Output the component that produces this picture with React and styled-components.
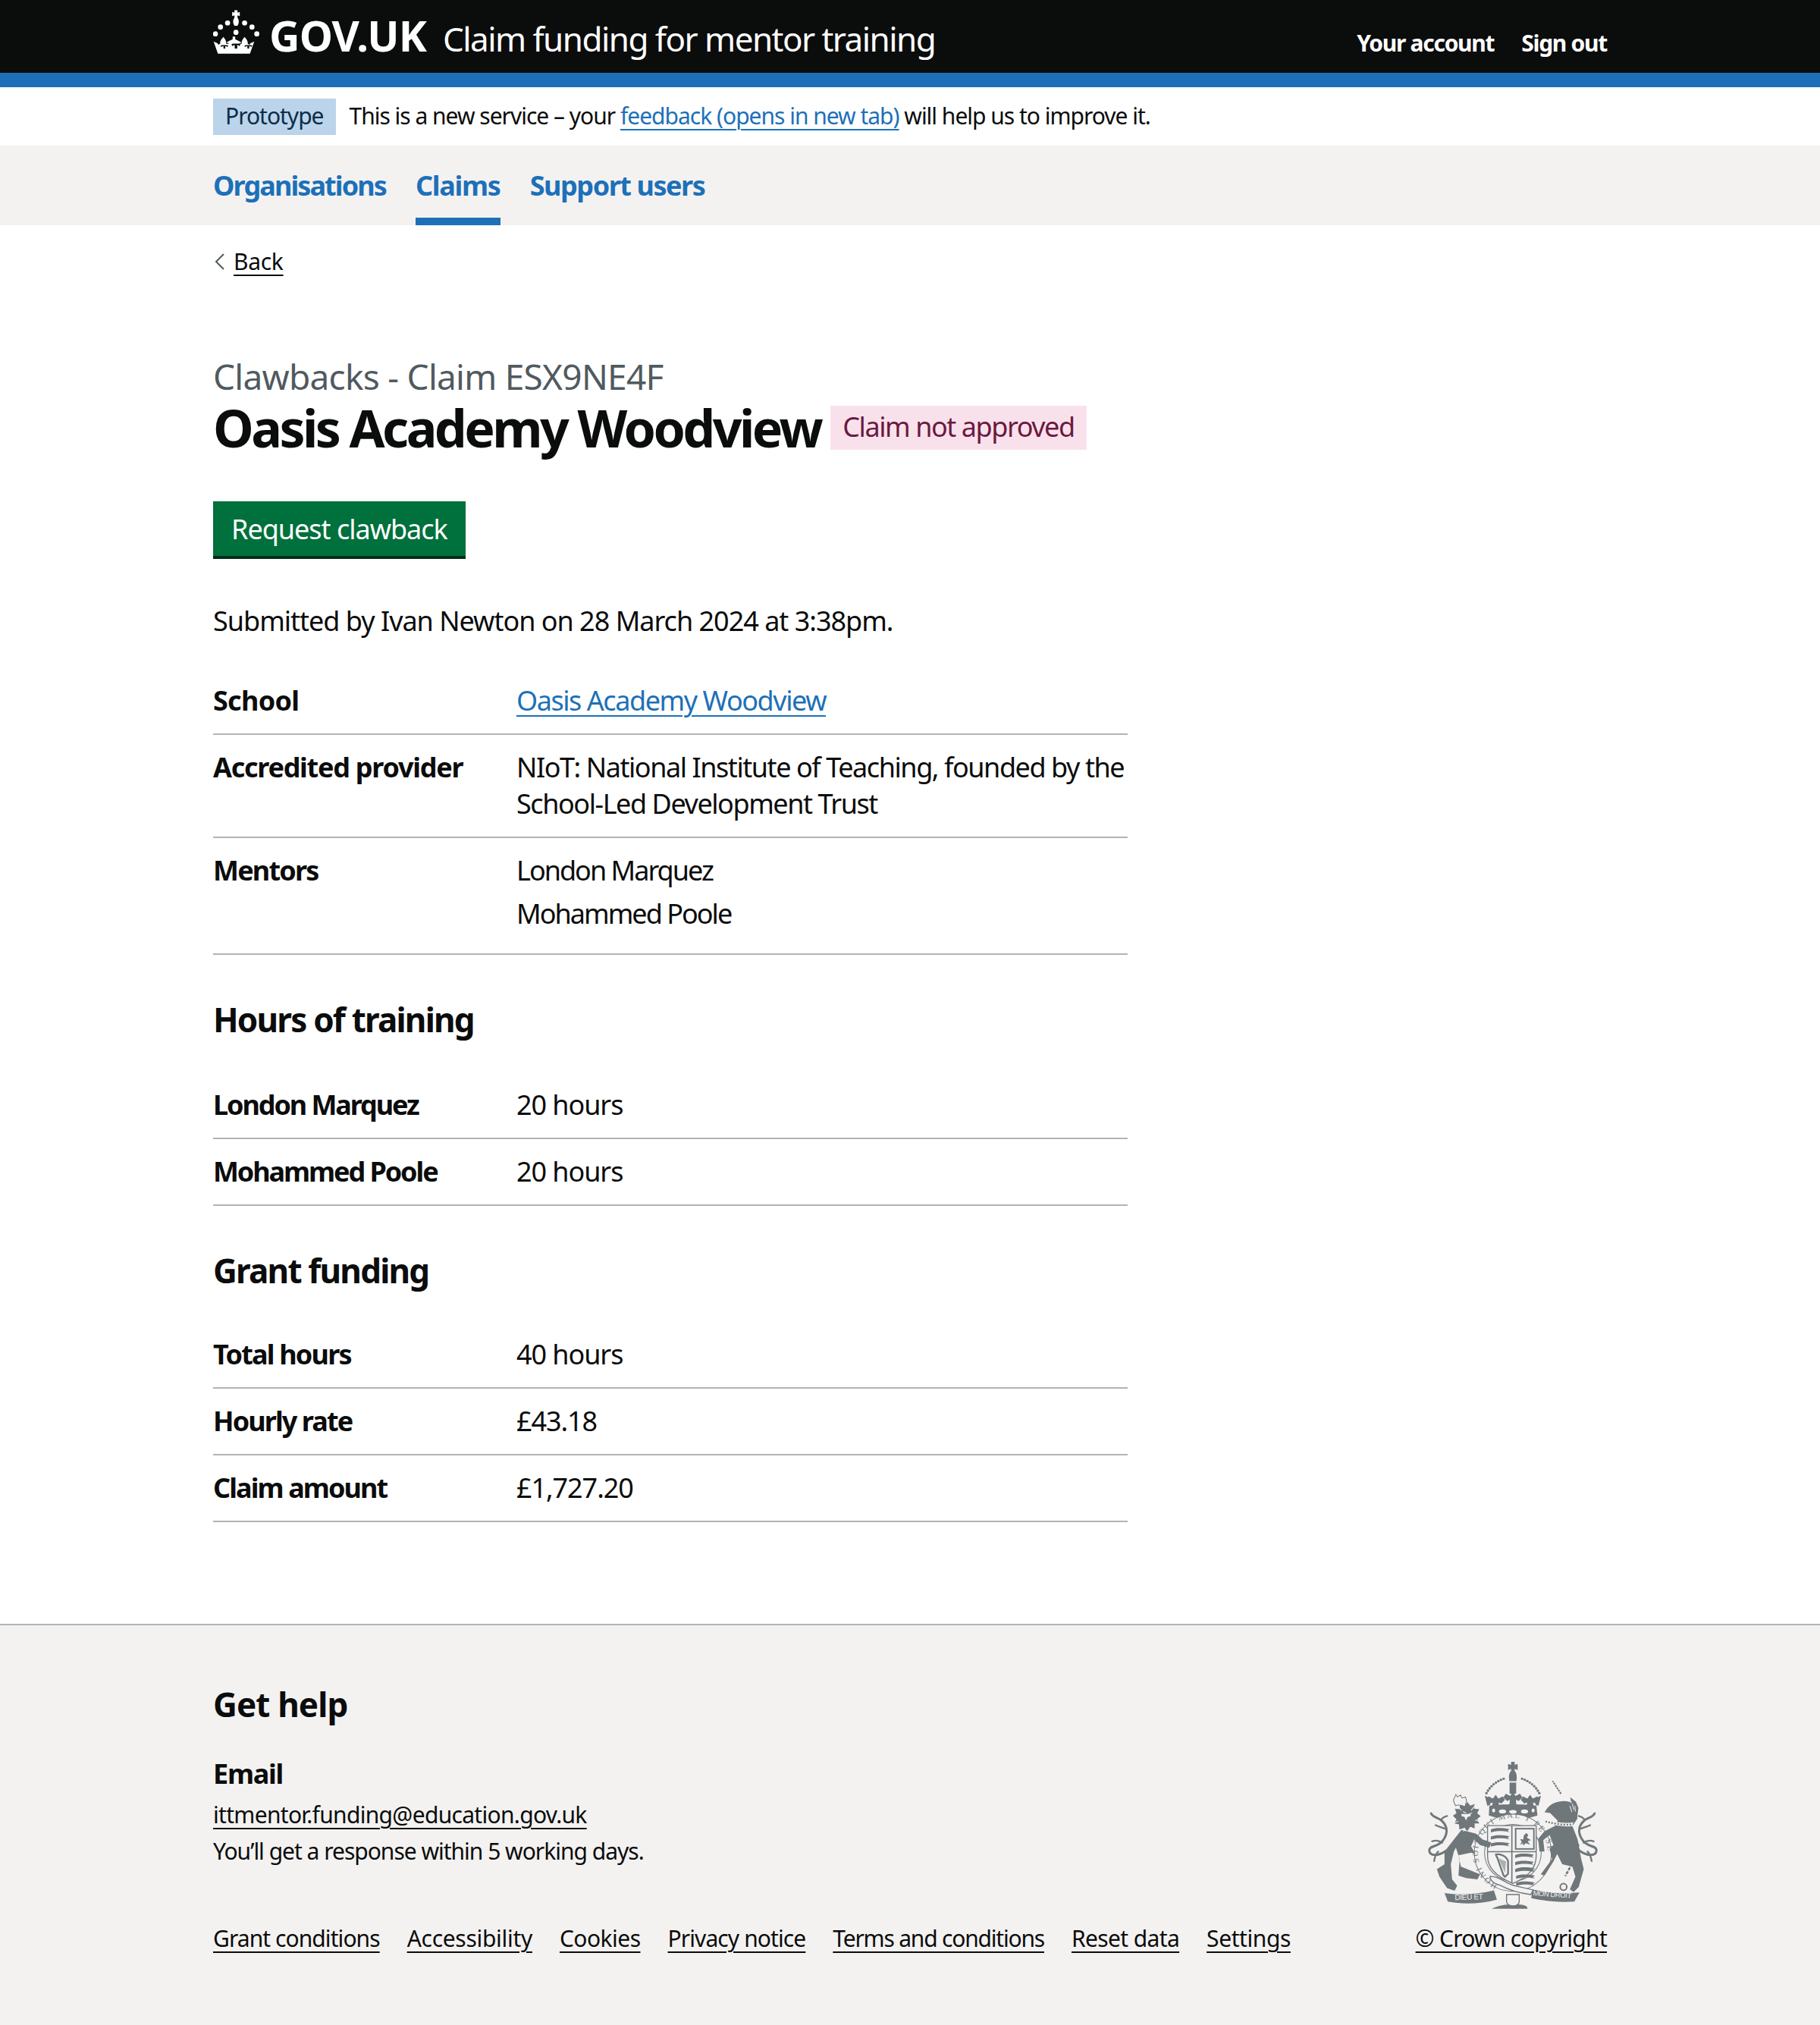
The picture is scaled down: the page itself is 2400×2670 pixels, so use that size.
import React from "react";
import styled, { createGlobalStyle } from "styled-components";

const Global = createGlobalStyle`
  html, body { margin: 0; padding: 0; background: #fff; }
  body { font-family: "Noto Sans", sans-serif; color: #0b0c0c; font-size: 36px; line-height: 48px; letter-spacing: -0.028em; }
  * { box-sizing: border-box; }
`;
const Wrap = styled.div`width: 1838px; margin: 0 auto;`;

const Header = styled.header`height: 115px; background: #0b0c0c; border-bottom: 19px solid #1d70b8; color: #fff;`;
const HeaderInner = styled(Wrap)`display: flex; align-items: baseline; padding-top: 16px;`;
const Logo = styled.a`display: flex; align-items: baseline; color: #fff; text-decoration: none;`;
const CrownSvg = styled.svg`width: 61px; height: 58px; margin-right: 13px; align-self: flex-start; margin-top: -3px; fill: #fff; flex: none;`;
const Word = styled.span`font-weight: 700; font-size: 56px; line-height: 60px; letter-spacing: -0.015em;`;
const Service = styled.a`margin-left: 22px; font-size: 44px; line-height: 60px; letter-spacing: -0.035em; color: #fff; text-decoration: none;`;
const Account = styled.nav`margin-left: auto; display: flex; gap: 36px;`;
const AccountLink = styled.a`font-weight: 700; font-size: 30px; letter-spacing: -0.043em; color: #fff; text-decoration: none;`;

const Phase = styled(Wrap)`height: 77px; display: flex; align-items: flex-start; gap: 18px; padding-top: 15px;`;
const PhaseTag = styled.strong`height: 48px; padding: 0 16px; background: #bbd4ea; color: #0c2d4a; font-weight: 400; font-size: 30px; line-height: 46px;`;
const PhaseText = styled.span`font-size: 30px; line-height: 46px;`;
const Link = styled.a`color: #1d70b8; text-decoration: underline; text-decoration-thickness: 2px; text-underline-offset: 6px;`;

const NavBar = styled.div`background: #f3f2f1; height: 105px;`;
const NavInner = styled(Wrap)`display: flex; gap: 39px; height: 105px;`;
const NavItem = styled.a`display: flex; align-items: center; padding-top: 10px; font-weight: 700; font-size: 36px; letter-spacing: ${p => p.$track}em; color: #1d70b8; border-bottom: 10px solid ${p => p.$active ? "#1d70b8" : "transparent"};`;

const Back = styled.a`display: inline-flex; align-items: center; gap: 10px; margin-top: 28px; height: 40px; font-size: 30px; line-height: 40px; letter-spacing: -0.01em; color: #0b0c0c;`;
const BackText = styled.span`text-decoration: underline; text-decoration-thickness: 2px; text-underline-offset: 6px;`;
const BackIcon = styled.svg`width: 16px; height: 24px; margin-left: 1px; fill: none; stroke: #505a5f; stroke-width: 2;`;

const Main = styled.main`padding-top: 100px; padding-bottom: 134px; width: 1206px;`;
const Caption = styled.div`font-size: 46px; line-height: 56px; color: #505a5f; letter-spacing: -0.016em;`;
const TitleRow = styled.div`display: flex; align-items: center; gap: 13px; height: 80px; margin-bottom: 57px;`;
const H1 = styled.h1`margin: 0; font-size: 68px; line-height: 80px; font-weight: 700; letter-spacing: -0.052em;`;
const Tag = styled.span`height: 58px; padding: 0 16px; background: #f9e1ec; color: #6b1a3f; font-size: 36px; line-height: 56px; letter-spacing: -0.04em;`;
const Button = styled.a`display: inline-flex; align-items: center; height: 76px; padding: 2px 24px 0; background: #00703c; border-bottom: 4px solid #002d18; color: #fff; font-size: 36px;`;
const Lead = styled.p`margin: 58px 0 38px; font-size: 36px; line-height: 48px;`;

const H2 = styled.h2`margin: ${p => p.$top}px 0 ${p => p.$bottom}px; font-size: 44px; line-height: 60px; font-weight: 700; letter-spacing: -0.041em;`;
const Row = styled.div`display: grid; grid-template-columns: 400px 1fr; padding: 19px 0 19px; border-bottom: 2px solid #b1b4b6;`;
const Key = styled.div`font-weight: 700; letter-spacing: ${p => p.$track ?? -0.05}em;`;
const Val = styled.div`letter-spacing: -0.04em;`;
const NumVal = styled.div`letter-spacing: -0.03em;`;
const ValLine = styled.p`margin: 0 0 9px; letter-spacing: -0.055em;`;

const Footer = styled.footer`background: #f3f2f1; border-top: 2px solid #b1b4b6; height: 530px; padding-top: 74px;`;
const FootH2 = styled.h2`margin: 0 0 38px; font-size: 44px; line-height: 60px; font-weight: 700; letter-spacing: -0.02em;`;
const FootKey = styled.div`font-weight: 700; font-size: 36px; line-height: 48px; letter-spacing: -0.035em; margin-bottom: 6px;`;
const FootLine = styled.div`font-size: 30px; line-height: 48px; color: #0b0c0c;`;
const DarkLink = styled.a`color: #0b0c0c; letter-spacing: ${p => p.$track}em; text-decoration: underline; text-decoration-thickness: 2px; text-underline-offset: 6px;`;
const FootMeta = styled.div`display: flex; justify-content: space-between; align-items: flex-end; margin-top: 67px;`;
const FootLinks = styled.div`display: flex; gap: 36px; font-size: 30px; line-height: 48px;`;
const Copyright = styled.div`position: relative; font-size: 30px; line-height: 48px;`;
const Arms = styled.svg`position: absolute; right: 12px; bottom: 62px; width: 224px; height: 197px;`;

const Crown = () => (
  <CrownSvg viewBox="63 40 182 172" aria-hidden="true">
    <path d="M147 41h12v10l9-3v16l-9-3v9c7 10 7 22 0 32h-12c-7-10-7-22 0-32v-9l-9 3V48l9 3z" />
    <circle cx="120" cy="91" r="10" /><circle cx="187" cy="91" r="10" />
    <circle cx="92" cy="107" r="10" /><circle cx="216" cy="107" r="10" />
    <circle cx="72" cy="134" r="10" /><circle cx="235" cy="134" r="10" />
    <circle cx="153" cy="128" r="10" />
    <path d="M65 164l15 7 4 6 7-5c-2-6 3-14 7-20l6-6 4 6c4 6 8 14 6 20l10 2v-3l-9-3 14-8 11-5v-10h10v10l11 5 14 8-9 3v3l10-2c-2-6 2-14 6-20l4-6 6 6c4 6 9 14 7 20l7 5 4-6 15-7-17 48H82zM97 178l-5 3 3 5 4-3h5v9h7v-9h5l4 3 3-5-5-3zM141 172l-6 4 4 6 6-4h3v14h10v-14h3l6 4 4-6-6-4zM191 178l-5 3 3 5 4-3h5v9h7v-9h5l4 3 3-5-5-3z" fillRule="evenodd" />
  </CrownSvg>
);

const INK = "#6f777b";
const BG = "#f3f2f1";

const Tail = ({ flip }) => (
  <g transform={flip ? "translate(930 0) scale(-1 1)" : undefined} fill="none" stroke={INK} strokeWidth="9" strokeLinecap="round">
    <path d="M205 415C170 440 135 440 135 415C135 395 170 405 190 375C212 345 205 315 180 295C165 285 150 285 142 270" />
    <path d="M180 295C190 285 196 282 205 280M186 385C170 375 158 375 146 380M170 420C160 430 156 445 154 458M196 330C180 322 170 322 160 316" strokeWidth="7" />
  </g>
);

const Quarter = ({ x, y }) => (
  <g transform={`translate(${x} ${y})`} fill={INK}>
    <path d="M0 8c18-7 40-7 74-1l-8 6 8 6c-30-6-52-6-74 1zM0 36c18-7 40-7 74-1l-8 6 8 6c-30-6-52-6-74 1zM0 64c18-7 40-7 74-1l-8 6 8 6c-30-6-52-6-74 1z" />
  </g>
);

const Fleur = ({ x, y }) => (
  <path transform={`translate(${x} ${y})`} d="M0 0l11 15 17-9 9 14-14 15-11-5 2 24h-28l2-24-11 5-14-15 9-14 17 9z" />
);

const archDots = [];
for (let a = 152; a >= 108; a -= 5.5) {
  const r = (a * Math.PI) / 180;
  archDots.push([465 + 118 * Math.cos(r), 245 - 118 * Math.sin(r)]);
  archDots.push([465 - 118 * Math.cos(r), 245 - 118 * Math.sin(r)]);
}

const RoyalArms = () => (
  <Arms viewBox="130 60 670 590" aria-hidden="true">
    <g fill={INK}>
      <path d="M458 66h14v12l12-4v24l-12-4v8c8 8 10 20 7 40h-28c-3-20-1-32 7-40v-8l-12 4V74l12 4z" />
      <path d="M452 148h26v44h-26z" />
      {archDots.map(([cx, cy]) => <circle key={`${cx}`} cx={cx} cy={cy} r="5" />)}
      <Fleur x={465} y={186} /><Fleur x={397} y={196} /><Fleur x={533} y={196} />
      <path d="M354 200l14 6 8 30-12 4zM576 200l-14 6-8 30 12 4z" />
      <path d="M372 240c48-8 138-8 186 0l4 38c-60 20-134 20-192 0z" />
      <ellipse cx="424" cy="262" rx="14" ry="8" fill={BG} /><ellipse cx="465" cy="264" rx="15" ry="8" fill={BG} /><ellipse cx="511" cy="262" rx="14" ry="8" fill={BG} />
      <ellipse cx="389" cy="258" rx="6" ry="8" fill={BG} /><ellipse cx="545" cy="258" rx="6" ry="8" fill={BG} />
    </g>
    <circle cx="465" cy="425" r="152" fill={BG} stroke={INK} strokeWidth="3" />
    <circle cx="465" cy="425" r="112" fill="none" stroke={INK} strokeWidth="3" />
    <defs><path id="garter" d="M420 556A138 138 0 1 1 510 556" /></defs>
    <text fontFamily="Liberation Serif, serif" fontSize="32" fill={INK} letterSpacing="6"><textPath href="#garter" startOffset="2%">HONI SOIT QUI MAL Y PENSE</textPath></text>
    <path d="M365 318h192v120c0 58-48 90-92 108-44-18-100-50-100-108z" fill={BG} stroke={INK} strokeWidth="4" />
    <path d="M461 318v226M365 421h192" stroke={INK} strokeWidth="5" />
    <Quarter x={378} y={325} />
    <rect x="476" y="330" width="72" height="80" fill="none" stroke={INK} strokeWidth="6" />
    <path d="M492 395l8-12-6-12 12 2 2-16 10-10 8 8-6 10 16 10-12 4 8 14-16-6-10 10-2-10z" fill={INK} />
    <path d="M398 432c20-4 42 8 48 26v50l-12 12-6-6-24-68c-3-6-6-10-6-14z" fill="none" stroke={INK} strokeWidth="7" />
    <path d="M408 446l26 58 4-44z" fill="#a9aeb0" />
    <Quarter x={474} y={426} />
    <Quarter x={478} y={480} />
    <Tail /><Tail flip />
    <g fill={INK}>
      <path d="M262 335l58 15 25 22 35 13-8 20-37-10-23-23-12 28 18 30-18-5-50 10 10 45 25 10 50 20-10 20-45-5-30-10 5-65-15-45-8 15-12 50 5 60 20 25-10 20-30-10-30-45-10-30 30-20v-50z" />
      <path d="M286 225l10 14 18-6-2 18 20 2-8 16 14 12-14 10 8 18-18 0 0 20-18-6-10 16-14-12-18 6-2-20-18-4 8-16-14-14 14-10-6-18 18 2 2-18 18 4z" />
      <path d="M240 195l6 10 12-8 6 12 14-4 4 14-6 24c-12-6-28-8-38-4l-8-22z" fill={BG} stroke={INK} strokeWidth="3" />
      <path d="M262 272h36v8l-12 4-6 14-6-14-12-4z" fill={BG} />
      <path d="M600 250c20-25 60-35 90-25l25 15 5 50-20 30 20 50 15 80 10 40-20 70-20 20-15-10 22-50-12-40-40-10-20-40-15 30-35 55-15-5 45-60-10-40 15-15-15-40-25 20 5 45-20 0-5-50 25-30 40-20 12-22-30-30-22-3z" />
      <path d="M692 206l22 18 10 24-4 30-8 16-6-6 2-40-14-28z" />
    </g>
    <path d="M262 258l-14-18M300 258l16-20M250 300l-18 8M316 296l18 6M276 326l-6 16M300 324l10 14M268 262l12 6M304 268l-12 4" stroke={BG} strokeWidth="3" fill="none" />
    <path d="M700 232l6 24M710 240l2 22M690 240l8 24" stroke={BG} strokeWidth="3" fill="none" />
    <path d="M655 192L622 142" stroke={INK} strokeWidth="6" strokeDasharray="8 3" />
    <path d="M594 302c34 8 76 16 110 10" fill="none" stroke={BG} strokeWidth="14" />
    <path d="M594 302c34 8 76 16 110 10" fill="none" stroke={INK} strokeWidth="7" strokeDasharray="6 6" />
    <path d="M702 362c30 24 28 60 0 100l-30 55" fill="none" stroke={INK} strokeWidth="8" strokeDasharray="12 5" />
    <circle cx="665" cy="560" r="13" fill="none" stroke={INK} strokeWidth="6" />
    <g fill={INK}>
      <path d="M195 584c60 10 130 6 195-10l12 36c-60 16-130 20-194 8z" />
      <path d="M540 570c60 12 125 18 188 12l-20 36c-60 4-115-2-170-14z" />
      <path d="M382 646c40-24 150-24 140 0-40 0-100 0-140 0z" />
      <path d="M375 518c40 0 60 30 100 38l70 16-10 18c-50-6-90-20-120-36-20-6-40-16-40-36z" fill={BG} stroke={INK} strokeWidth="4" />
      <path d="M440 590h50v30c-6 20-42 20-50 0z" fill={BG} stroke={INK} strokeWidth="4" />
    </g>
    <text x="236" y="612" fontFamily="Liberation Sans, sans-serif" fontSize="30" fill={BG} transform="rotate(-2 236 612)">DIEU ET</text>
    <text x="544" y="594" fontFamily="Liberation Sans, sans-serif" fontSize="28" fill={BG} transform="rotate(4 544 594)">MON DROIT</text>
  </Arms>
);

const footerLinks = [
  ["Grant conditions", -0.031], ["Accessibility", -0.01], ["Cookies", -0.018], ["Privacy notice", -0.03],
  ["Terms and conditions", -0.04], ["Reset data", -0.021], ["Settings", -0.014],
];

export default function App() {
  return (
    <>
      <Global />
      <Header>
        <HeaderInner>
          <Crown />
          <Logo><Word>GOV.UK</Word></Logo>
          <Service>Claim funding for mentor training</Service>
          <Account><AccountLink>Your account</AccountLink><AccountLink>Sign out</AccountLink></Account>
        </HeaderInner>
      </Header>
      <Phase>
        <PhaseTag>Prototype</PhaseTag>
        <PhaseText>This is a new service – your <Link>feedback (opens in new tab)</Link> will help us to improve it.</PhaseText>
      </Phase>
      <NavBar>
        <NavInner>
          <NavItem $track={-0.053}>Organisations</NavItem>
          <NavItem $track={-0.035} $active>Claims</NavItem>
          <NavItem $track={-0.04}>Support users</NavItem>
        </NavInner>
      </NavBar>
      <Wrap>
        <Back>
          <BackIcon viewBox="0 0 16 24"><path d="M13 2L3 12l10 10" /></BackIcon>
          <BackText>Back</BackText>
        </Back>
        <Main>
          <Caption>Clawbacks - Claim ESX9NE4F</Caption>
          <TitleRow><H1>Oasis Academy Woodview</H1><Tag>Claim not approved</Tag></TitleRow>
          <Button>Request clawback</Button>
          <Lead>Submitted by Ivan Newton on 28 March 2024 at 3:38pm.</Lead>
          <Row><Key $track={-0.02}>School</Key><Val><Link>Oasis Academy Woodview</Link></Val></Row>
          <Row><Key $track={-0.035}>Accredited provider</Key><Val>NIoT: National Institute of Teaching, founded by the School-Led Development Trust</Val></Row>
          <Row><Key>Mentors</Key><Val><ValLine>London Marquez</ValLine><ValLine>Mohammed Poole</ValLine></Val></Row>
          <H2 $top={55} $bottom={40}>Hours of training</H2>
          <Row><Key $track={-0.058}>London Marquez</Key><NumVal>20 hours</NumVal></Row>
          <Row><Key $track={-0.058}>Mohammed Poole</Key><NumVal>20 hours</NumVal></Row>
          <H2 $top={55} $bottom={38}>Grant funding</H2>
          <Row><Key>Total hours</Key><NumVal>40 hours</NumVal></Row>
          <Row><Key $track={-0.053}>Hourly rate</Key><NumVal>£43.18</NumVal></Row>
          <Row><Key $track={-0.053}>Claim amount</Key><NumVal>£1,727.20</NumVal></Row>
        </Main>
      </Wrap>
      <Footer>
        <Wrap>
          <FootH2>Get help</FootH2>
          <FootKey>Email</FootKey>
          <FootLine><DarkLink $track={-0.023}>ittmentor.funding@education.gov.uk</DarkLink></FootLine>
          <FootLine>You’ll get a response within 5 working days.</FootLine>
          <FootMeta>
            <FootLinks>
              {footerLinks.map(([t, track]) => <DarkLink key={t} $track={track}>{t}</DarkLink>)}
            </FootLinks>
            <Copyright><RoyalArms /><DarkLink $track={-0.024}>© Crown copyright</DarkLink></Copyright>
          </FootMeta>
        </Wrap>
      </Footer>
    </>
  );
}
